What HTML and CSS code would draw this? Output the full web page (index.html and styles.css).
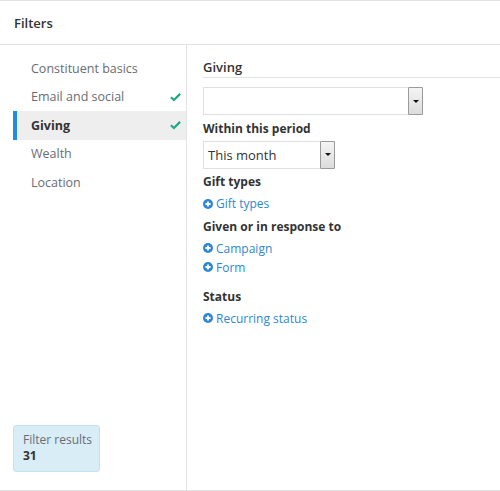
FILE: index.html
```html
<!DOCTYPE html>
<html>
<head>
<meta charset="utf-8">
<link rel="stylesheet" href="styles.css">
</head>
<body>
<div class="page">
  <div class="header">Filters</div>
  <div class="main">
    <div class="sidebar">
      <ul class="nav">
        <li class="nav-item">Constituent basics</li>
        <li class="nav-item">Email and social<svg class="check" viewBox="0 0 12 10"><path d="M1 5.2 L4.3 8.3 L11 1.6" /></svg></li>
        <li class="nav-item active">Giving<svg class="check" viewBox="0 0 12 10"><path d="M1 5.2 L4.3 8.3 L11 1.6" /></svg></li>
        <li class="nav-item">Wealth</li>
        <li class="nav-item">Location</li>
      </ul>
      <div class="results">
        <div class="results-label">Filter results</div>
        <div class="results-count">31</div>
      </div>
    </div>
    <div class="content">
      <div class="section-title">Giving</div>
      <div class="select select-wide"><span class="select-text"></span><span class="select-btn"><span class="caret"></span></span></div>
      <div class="label">Within this period</div>
      <div class="select select-narrow"><span class="select-text">This month</span><span class="select-btn"><span class="caret"></span></span></div>
      <div class="label">Gift types</div>
      <a class="add-link"><svg class="plus" viewBox="0 0 10 10"><circle cx="5" cy="5" r="5"/><path d="M5 2.4 V7.6 M2.4 5 H7.6"/></svg>Gift types</a>
      <div class="label">Given or in response to</div>
      <a class="add-link"><svg class="plus" viewBox="0 0 10 10"><circle cx="5" cy="5" r="5"/><path d="M5 2.4 V7.6 M2.4 5 H7.6"/></svg>Campaign</a>
      <a class="add-link"><svg class="plus" viewBox="0 0 10 10"><circle cx="5" cy="5" r="5"/><path d="M5 2.4 V7.6 M2.4 5 H7.6"/></svg>Form</a>
      <div class="label label-spaced">Status</div>
      <a class="add-link"><svg class="plus" viewBox="0 0 10 10"><circle cx="5" cy="5" r="5"/><path d="M5 2.4 V7.6 M2.4 5 H7.6"/></svg>Recurring status</a>
    </div>
  </div>
</div>
</body>
</html>
```
FILE: styles.css
```css
html, body {
  margin: 0;
  padding: 0;
  background: #fff;
}
body {
  font-family: "Open Sans", "Noto Sans", sans-serif;
  font-size: 12px;
  color: #333;
}
.page {
  width: 500px;
  height: 491px;
  box-sizing: border-box;
  border-top: 1px solid #e2e2e2;
  display: flex;
  flex-direction: column;
}
.header {
  height: 44px;
  box-sizing: border-box;
  padding-left: 14px;
  display: flex;
  align-items: center;
  font-size: 13px;
  font-weight: 600;
  color: #333;
  border-bottom: 1px solid #e2e2e2;
}
.main {
  flex: 1;
  display: flex;
  border-bottom: 1px solid #e2e2e2;
}
.sidebar {
  width: 187px;
  box-sizing: border-box;
  border-right: 1px solid #e2e2e2;
  display: flex;
  flex-direction: column;
  justify-content: space-between;
  align-items: flex-start;
  padding: 9px 0 18px 13px;
}
.nav {
  list-style: none;
  margin: 0;
  padding: 0;
  align-self: stretch;
}
.nav-item {
  height: 28.5px;
  box-sizing: border-box;
  display: flex;
  align-items: center;
  justify-content: space-between;
  padding: 0 5px 0 14px;
  font-size: 12.5px;
  color: #686c73;
  border-left: 4px solid transparent;
}
.nav-item.active {
  background: #eeeeee;
  border-left-color: #1f8de0;
  font-weight: 700;
  color: #333;
}
.check {
  width: 11px;
  height: 10px;
  fill: none;
  stroke: #22a884;
  stroke-width: 2.4;
}
.results {
  width: 87px;
  box-sizing: border-box;
  padding: 6px 0 7px 9px;
  background: #d9edf7;
  border: 1px solid #c3e3f0;
  border-radius: 3px;
  line-height: 16px;
  white-space: nowrap;
}
.results-label {
  color: #686c73;
  font-size: 12px;
}
.results-count {
  font-weight: 700;
  color: #333;
  font-size: 12px;
}
.content {
  flex: 1;
  padding: 13px 0 0 16px;
  display: flex;
  flex-direction: column;
  align-items: flex-start;
}
.section-title {
  align-self: stretch;
  font-size: 13px;
  font-weight: 600;
  color: #333;
  line-height: 18px;
  padding-bottom: 1px;
  border-bottom: 1px solid #e2e2e2;
  margin-bottom: 9px;
}
.select {
  height: 28px;
  box-sizing: border-box;
  border: 1px solid #e0e0e0;
  display: flex;
  align-items: stretch;
  background: #fff;
}
.select-wide { width: 220px; }
.select-narrow { width: 132px; }
.select-text {
  flex: 1;
  display: flex;
  align-items: center;
  padding-left: 4px;
  font-size: 13px;
  color: #333;
}
.select-btn {
  width: 15px;
  box-sizing: border-box;
  border: 1px solid #9a9a9a;
  margin: -1px -1px -1px 0;
  border-radius: 1px;
  background: linear-gradient(#f4f4f4, #dcdcdc);
  display: flex;
  align-items: center;
  justify-content: center;
}
.caret {
  width: 0;
  height: 0;
  border-left: 3px solid transparent;
  border-right: 3px solid transparent;
  border-top: 3px solid #111;
}
.label {
  font-weight: 700;
  font-size: 12px;
  color: #333;
  line-height: 16px;
  margin: 5.5px 0 4px;
}
.label-spaced {
  margin-top: 12px;
}
.add-link {
  display: flex;
  align-items: center;
  color: #2f87d0;
  font-size: 12px;
  line-height: 19px;
}
.plus {
  width: 10px;
  height: 10px;
  margin-right: 3px;
}
.plus circle { fill: #2f87d0; }
.plus path { stroke: #fff; stroke-width: 1.8; fill: none; }
```
